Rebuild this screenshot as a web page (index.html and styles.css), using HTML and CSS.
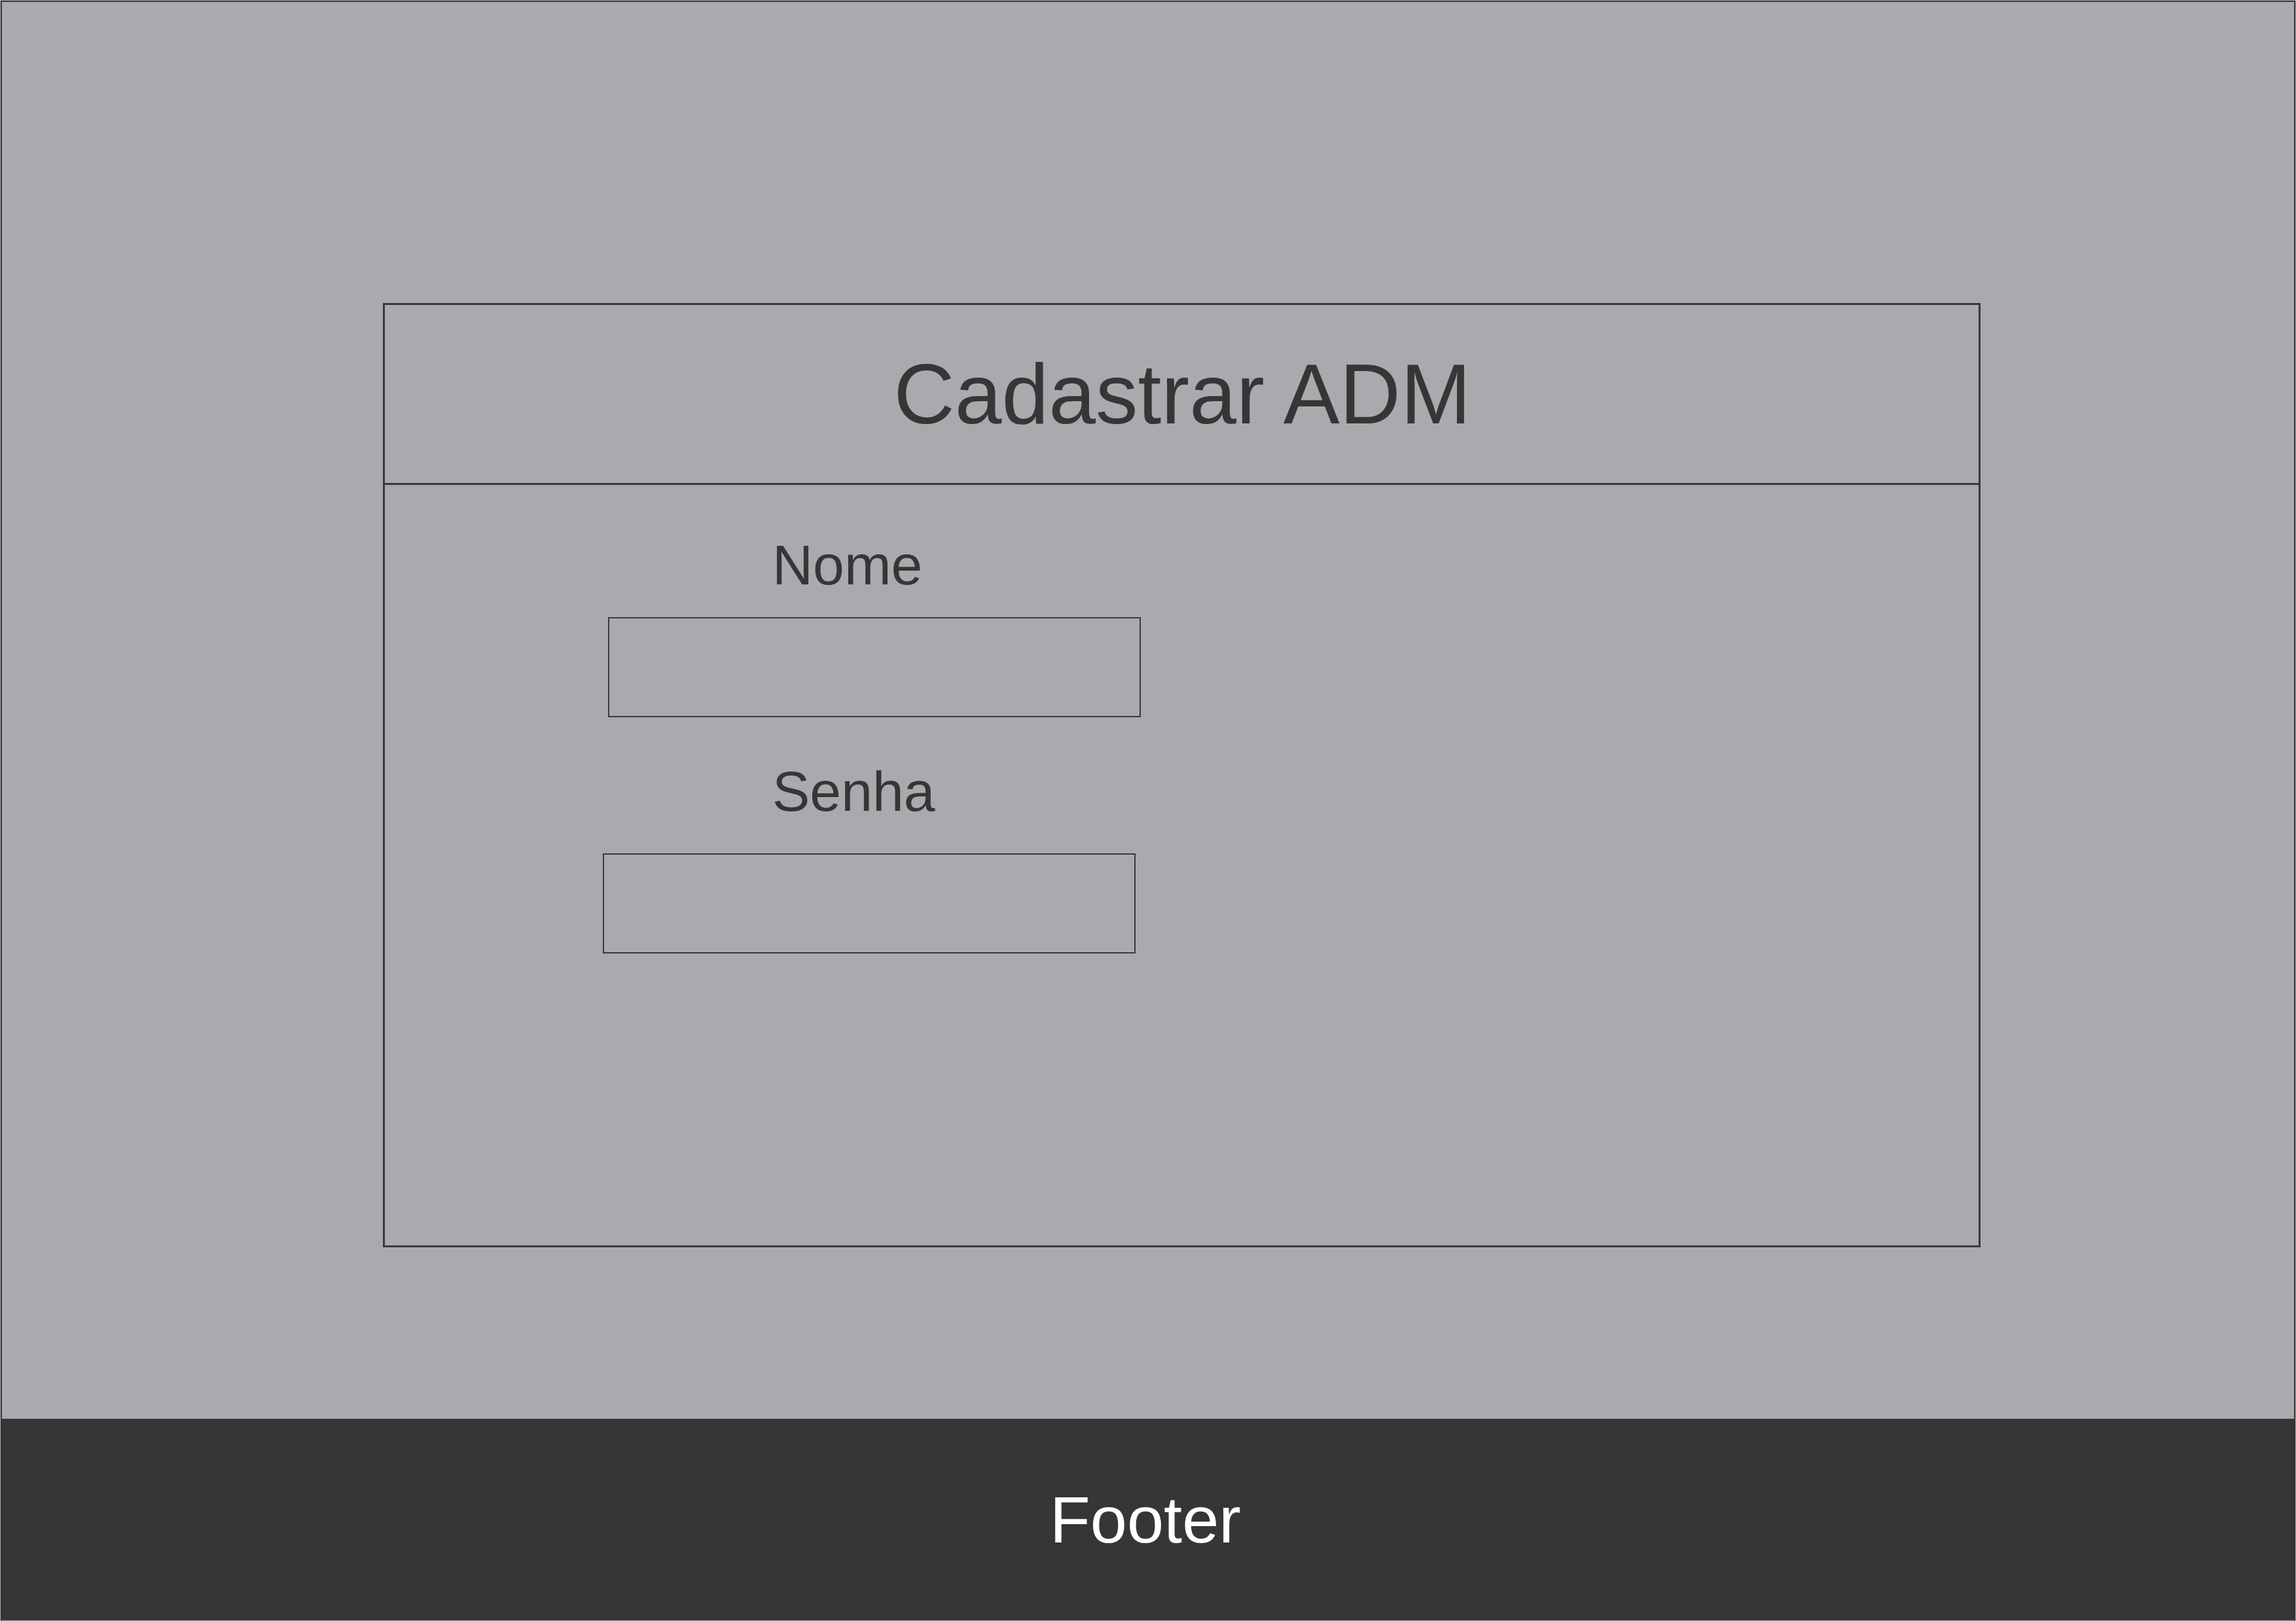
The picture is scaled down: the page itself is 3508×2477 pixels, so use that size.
FILE: index.html
```html
<!DOCTYPE html>
<html lang="pt">
<head>
<meta charset="utf-8">
<title>Cadastrar ADM</title>
<link rel="stylesheet" href="styles.css">
</head>
<body>
<div class="page">
  <main class="main">
    <section class="card">
      <header class="card-header">
        <h1 class="card-title">Cadastrar ADM</h1>
      </header>
      <div class="card-body">
        <div class="field field-nome">
          <label class="field-label">Nome</label>
          <div class="field-input"></div>
        </div>
        <div class="field field-senha">
          <label class="field-label">Senha</label>
          <div class="field-input"></div>
        </div>
      </div>
    </section>
  </main>
  <footer class="footer">Footer</footer>
</div>
</body>
</html>
```
FILE: styles.css
```css
html, body {
  margin: 0;
  padding: 0;
}

body {
  width: 3508px;
  height: 2477px;
  background: #a9aaad;
  font-family: "Liberation Sans", Arial, sans-serif;
  color: #373536;
  overflow: hidden;
}

.page {
  display: flex;
  flex-direction: column;
  height: 2477px;
  padding-top: 1px;
  box-sizing: border-box;
}

.main {
  margin: 0 1px;
  height: 2167px;
  box-sizing: border-box;
  border: 2px solid #3a393b;
  border-bottom: none;
  padding-top: 460px;
  padding-left: 582px;
}

.card {
  width: 2441px;
  height: 1443px;
  box-sizing: border-box;
  border: 3px solid #3a393b;
  display: flex;
  flex-direction: column;
}

.card-header {
  height: 275px;
  box-sizing: border-box;
  border-bottom: 3px solid #3a393b;
  display: flex;
  align-items: center;
  justify-content: center;
}

.card-title {
  margin: 0;
  font-weight: normal;
  font-size: 129px;
  line-height: 1;
  color: #373536;
  padding-left: 2px;
}

.card-body {
  flex: 1;
  padding-top: 79px;
  display: flex;
  flex-direction: column;
}

.field {
  display: flex;
  flex-direction: column;
  align-items: flex-start;
}

.field-label {
  font-size: 86px;
  line-height: 1;
  color: #373536;
}

.field-input {
  width: 814px;
  height: 153px;
  box-sizing: border-box;
  border: 2px solid #3a393b;
}

.field-nome {
  margin-left: 341px;
}

.field-nome .field-label {
  margin-left: 251px;
  margin-bottom: 37px;
}

.field-senha {
  margin-left: 333px;
  margin-top: 70px;
}

.field-senha .field-label {
  margin-left: 259px;
  margin-bottom: 52px;
}

.footer {
  height: 308px;
  margin: 0 1px;
  background: #373536;
  color: #ffffff;
  font-size: 101px;
  line-height: 1;
  display: flex;
  align-items: center;
  justify-content: center;
  padding-right: 8px;
}
```
